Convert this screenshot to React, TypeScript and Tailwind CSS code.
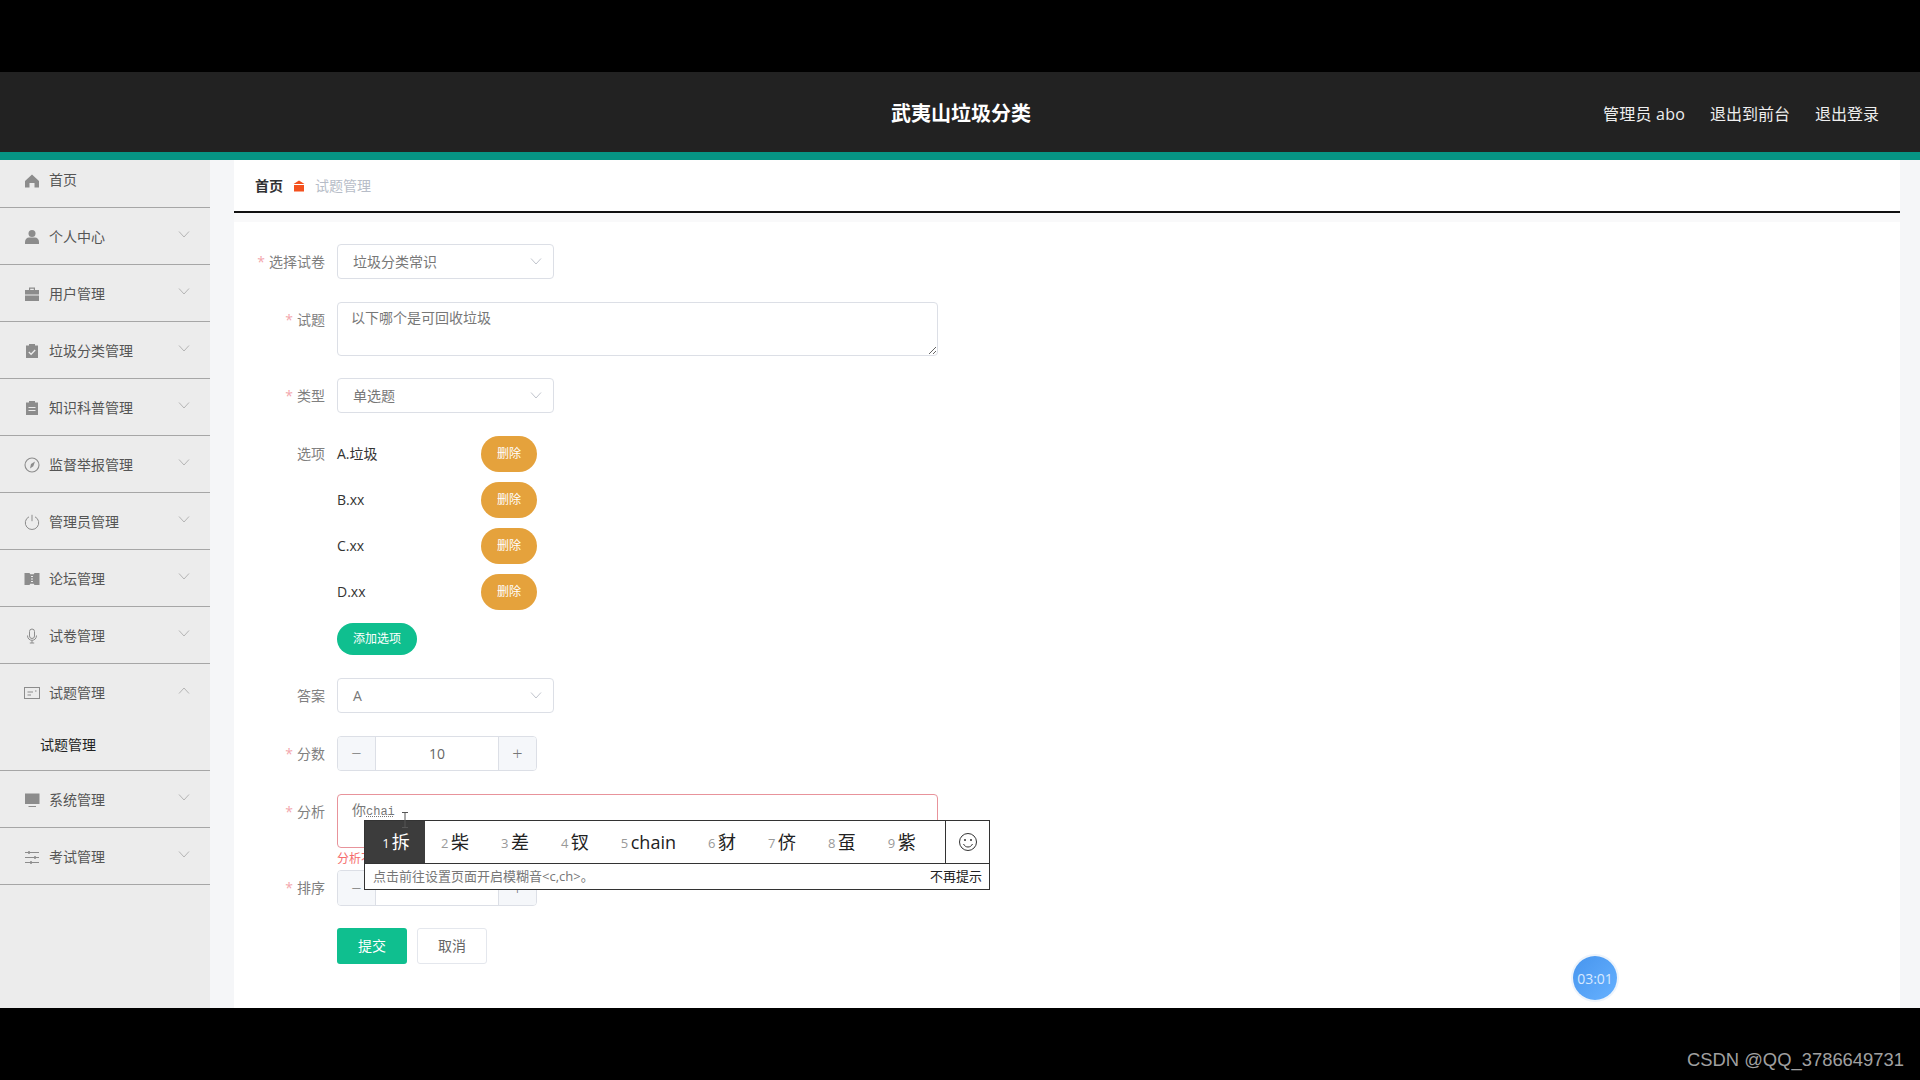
import type { ReactNode } from "react";

const FONT = { fontFamily: '"Open Sans", "Noto Sans CJK SC", sans-serif' };

function Svg({ children }: { children: ReactNode }) {
  return (
    <svg width="16" height="16" viewBox="0 0 16 16" className="shrink-0">
      {children}
    </svg>
  );
}

const GRAY = "#8c8c8c";

const icons: Record<string, ReactNode> = {
  home: <path d="M8 1.500 15 8v6.500h-4.500V10h-5v4.500H1V8Z" fill={GRAY} />,
  user: (
    <g fill={GRAY}>
      <circle cx="8" cy="4.500" r="3.500" />
      <path d="M1 13c0-3 2-4.500 4-4.500h6c2 0 4 1.500 4 4.500v2H1Z" />
    </g>
  ),
  briefcase: (
    <g fill={GRAY}>
      <path d="M5 1.500h6V4H9.800V2.800H6.200V4H5Z" />
      <path d="M1 4h14v4.500H1ZM1 9.500h14V15H1Z" />
    </g>
  ),
  claim: (
    <g>
      <path d="M2 2.500h12V15H2Z" fill={GRAY} />
      <path d="M5 1h6v3H5Z" fill={GRAY} />
      <path d="m4.800 9 2.300 2.300 4.100-4.300" fill="none" stroke="#ececec" strokeWidth="1.300" />
    </g>
  ),
  order: (
    <g>
      <path d="M2 2.500h12V15H2Z" fill={GRAY} />
      <path d="M5 1h6v3H5Z" fill={GRAY} />
      <path d="M4.500 7.500h7M4.500 10.500h7" stroke="#ececec" strokeWidth="1.200" />
    </g>
  ),
  compass: (
    <g>
      <circle cx="8" cy="8" r="7" fill="none" stroke={GRAY} strokeWidth="1.100" />
      <path d="M11 4.500 9.300 9.300 6 11.500l1-4.500Z" fill={GRAY} />
    </g>
  ),
  power: (
    <g fill="none" stroke={GRAY} strokeWidth="1">
      <path d="M5 2.800a6.700 6.700 0 1 0 6 0" />
      <path d="M8 .8v6.400" />
    </g>
  ),
  ticket: (
    <g>
      <path d="M.5 2h5l.8 1.200h3.400l.8-1.200h5v12h-5l-.8-1.200H6.300L5.500 14h-5Z" fill={GRAY} />
      <path d="M7 5.500h2M7 8h2M7 10.500h2" stroke="#ececec" strokeWidth="1" />
    </g>
  ),
  mic: (
    <g fill="none" stroke={GRAY} strokeWidth="1">
      <rect x="5.500" y="1" width="5" height="9.500" rx="2.500" />
      <path d="M3.500 7.500c0 3 2 4.800 4.500 4.800s4.500-1.800 4.500-4.800M8 12.300V15M5.800 15h4.400" />
    </g>
  ),
  note: (
    <g fill="none" stroke={GRAY} strokeWidth="1">
      <rect x=".5" y="2.500" width="15" height="11" />
      <path d="M3.500 7h5.500M3.500 10h3.500M11 6h1.500" />
    </g>
  ),
  monitor: (
    <g fill={GRAY}>
      <path d="M1 1.500h14.500v10.500H1Z" />
      <path d="M4.500 14h7.500v1H4.500Z" />
    </g>
  ),
  sliders: (
    <g fill="none" stroke={GRAY} strokeWidth="1">
      <path d="M1 3.500h14M1 8.500h14M1 13.500h14" />
      <path d="M5 2v3M11 7v3M7 12v3" strokeWidth="1.500" />
    </g>
  ),
};

function Chevron({ up = false, color = "#b4b4b4", size = 12 }: { up?: boolean; color?: string; size?: number }) {
  return (
    <svg width={size} height="7" viewBox="0 0 12 7" className="shrink-0">
      <path d={up ? "M1 6.500 6 1l5 5.500" : "M1 .5 6 6l5-5.500"} fill="none" stroke={color} strokeWidth="1" />
    </svg>
  );
}

function NavItem({ icon, label, up }: { icon: string; label: string; up?: boolean }) {
  return (
    <div className={`flex items-center pl-[24px] pr-[20px] pt-[1px] ${up ? "h-[56px]" : "h-[57px] border-b border-[#a6a6a6]"}`}>
      <Svg>{icons[icon]}</Svg>
      <span className="ml-[9px] flex-1 text-[14px] text-[#555]">{label}</span>
      <div className="mb-[5px]">
        <Chevron up={up} />
      </div>
    </div>
  );
}

function Sidebar() {
  return (
    <aside className="w-[210px] shrink-0 bg-[#ececec]">
      <div className="flex h-[48px] items-center border-b border-[#a6a6a6] pb-[5px] pl-[24px]">
        <Svg>{icons.home}</Svg>
        <span className="mb-[3px] ml-[9px] text-[14px] text-[#555]">首页</span>
      </div>
      <NavItem icon="user" label="个人中心" />
      <NavItem icon="briefcase" label="用户管理" />
      <NavItem icon="claim" label="垃圾分类管理" />
      <NavItem icon="order" label="知识科普管理" />
      <NavItem icon="compass" label="监督举报管理" />
      <NavItem icon="power" label="管理员管理" />
      <NavItem icon="ticket" label="论坛管理" />
      <NavItem icon="mic" label="试卷管理" />
      <NavItem icon="note" label="试题管理" up />
      <div className="flex h-[51px] items-center border-b border-[#a6a6a6] pb-[2px] pl-[40px] text-[14px] text-[#222]">试题管理</div>
      <NavItem icon="monitor" label="系统管理" />
      <NavItem icon="sliders" label="考试管理" />
    </aside>
  );
}

function Row({ label, required, className, children }: { label?: string; required?: boolean; className: string; children: ReactNode }) {
  return (
    <div className={`flex ${className}`}>
      <label className="mr-[12px] w-[91px] shrink-0 text-right text-[14px] leading-[35px] text-[#808080]">
        {required && <span className="mr-[4px] text-[#f3a6ad]">*</span>}
        {label}
      </label>
      {children}
    </div>
  );
}

function FakeSelect({ value }: { value: string }) {
  return (
    <div className="flex h-[35px] w-[217px] items-center justify-between rounded-[4px] border border-[#dcdfe6] bg-white pl-[15px] pr-[11px] text-[14px] text-[#777]">
      <span>{value}</span>
      <Chevron color="#c0c4cc" />
    </div>
  );
}

function NumberBox({ value, h }: { value?: string; h: string }) {
  return (
    <div className={`flex w-[200px] overflow-hidden rounded-[4px] border border-[#dcdfe6] text-[#777] ${h}`}>
      <div className="flex w-[38px] items-center justify-center border-r border-[#dcdfe6] bg-[#f5f7fa] text-[18px] font-light">−</div>
      <div className="flex flex-1 items-center justify-center text-[14px] text-[#666]">{value}</div>
      <div className="flex w-[38px] items-center justify-center border-l border-[#dcdfe6] bg-[#f5f7fa] text-[18px] font-light">+</div>
    </div>
  );
}

function OptionRow({ text, className }: { text: string; className: string }) {
  return (
    <div className={`flex items-center ${className}`}>
      <span className="mb-[1px] w-[144px] text-[14px] text-[#333]">{text}</span>
      <button className="h-[36px] w-[56px] rounded-[18px] bg-[#e5a23c] text-[12px] text-white">删除</button>
    </div>
  );
}

const candidates = [
  ["2", "柴"],
  ["3", "差"],
  ["4", "钗"],
  ["5", "chain"],
  ["6", "豺"],
  ["7", "侪"],
  ["8", "虿"],
  ["9", "紫"],
];

function ImePopup() {
  return (
    <div className="absolute left-[130px] top-[598px] w-[626px] border border-[#333] bg-white">
      <div className="flex h-[42px] items-center pt-[1px]">
        <div className="-mt-[1px] flex h-[42px] w-[60px] items-center justify-center bg-[#3c3c3c] pl-[2px] text-white">
          <span className="mr-[2px] mt-[3px] text-[13px]">1</span>
          <span className="text-[18px]">拆</span>
        </div>
        {candidates.map(([n, c]) => (
          <div key={n} className="flex items-center px-[16px] text-[18px] text-[#222]">
            <span className="mr-[2.5px] mt-[3px] text-[13px] text-[#999]">{n}</span>
            <span>{c}</span>
          </div>
        ))}
        <div className="-mt-[1px] ml-auto flex h-[42px] w-[44px] items-center justify-center border-l border-[#333]">
          <svg width="20" height="20" viewBox="0 0 20 20">
            <circle cx="10" cy="10" r="8.500" fill="none" stroke="#333" strokeWidth="1" />
            <circle cx="7" cy="8" r="1" fill="#333" />
            <circle cx="13" cy="8" r="1" fill="#333" />
            <path d="M5.500 12c1 2 2.500 3 4.500 3s3.500-1 4.500-3" fill="none" stroke="#333" strokeWidth="1" />
          </svg>
        </div>
      </div>
      <div className="flex h-[26px] items-center justify-between border-t border-[#333] pl-[8px] pr-[7px] text-[13px]">
        <span className="text-[#777]">点击前往设置页面开启模糊音&lt;c,ch&gt;。</span>
        <span className="text-[#222]">不再提示</span>
      </div>
    </div>
  );
}

function QuestionForm() {
  return (
    <div className="relative mt-[9px] flex-1 bg-white pt-[22px]">
      <Row label="选择试卷" required className="">
        <FakeSelect value="垃圾分类常识" />
      </Row>
      <Row label="试题" required className="mt-[23px]">
        <textarea
          className="h-[54px] w-[601px] rounded-[4px] border border-[#dcdfe6] px-[13px] py-[4px] text-[14px] text-[#777] outline-none"
          defaultValue="以下哪个是可回收垃圾"
        />
      </Row>
      <Row label="类型" required className="mt-[22px]">
        <FakeSelect value="单选题" />
      </Row>
      <Row label="选项" className="mt-[23px]">
        <OptionRow text="A.垃圾" className="" />
      </Row>
      <div className="ml-[103px]">
        <OptionRow text="B.xx" className="mt-[10px]" />
        <OptionRow text="C.xx" className="mt-[10px]" />
        <OptionRow text="D.xx" className="mt-[10px]" />
        <button className="mt-[13px] block h-[32px] w-[80px] rounded-[16px] bg-[#0fbf8f] text-[12px] text-white">添加选项</button>
      </div>
      <Row label="答案" className="mt-[23px]">
        <FakeSelect value="A" />
      </Row>
      <Row label="分数" required className="mt-[23px]">
        <NumberBox value="10" h="h-[35px]" />
      </Row>
      <Row label="分析" required className="mt-[23px]">
        <div className="relative h-[54px] w-[601px] rounded-[4px] border border-[#e8939b] px-[14px] py-[4px] text-[14px] text-[#777]">
          你<span className="font-['Liberation_Mono'] text-[12px] underline decoration-dotted">chai</span>
          <span className="absolute left-[-1px] top-[55px] text-[12px] text-[#f56c6c]">分析不能为空</span>
        </div>
      </Row>
      <Row label="排序" required className="mt-[22px]">
        <NumberBox h="h-[36px]" />
      </Row>
      <div className="ml-[103px] mt-[22px] flex gap-[10px]">
        <button className="h-[36px] w-[70px] rounded-[3px] bg-[#0fbf8f] pb-[2px] text-[14px] text-white">提交</button>
        <button className="h-[36px] w-[70px] rounded-[3px] border border-[#e4e7ed] bg-white pb-[2px] text-[14px] text-[#666]">取消</button>
      </div>

      <ImePopup />
      {/* text cursor sitting on the IME edge */}
      <svg width="10" height="16" viewBox="0 0 10 16" className="absolute left-[166px] top-[590px]">
        <path d="M2 .5h6M5 .5v15M2 15.500h6" fill="none" stroke="#555" strokeWidth="1" />
      </svg>
      {/* floating timer */}
      <div className="absolute bottom-[8px] right-[283px] flex h-[44px] w-[44px] items-center justify-center rounded-full bg-gradient-to-br from-[#4795ee] to-[#66b1ff] text-[14px] text-[#d8e9ff] shadow-[0_0_0_2px_#eef4fb]">
        03:01
      </div>
    </div>
  );
}

export default function App() {
  return (
    <div className="flex h-[1080px] flex-col overflow-hidden bg-black" style={FONT}>
      <div className="h-[72px] shrink-0" />
      <header className="grid h-[80px] shrink-0 grid-cols-[1fr_auto_1fr] items-center bg-[#222222] pt-[3px] text-white">
        <div />
        <div className="pl-[2px] text-[20px] font-bold">武夷山垃圾分类</div>
        <div className="flex justify-end gap-[25px] pr-[41px] text-[16px] text-[#eee]">
          <span className="tracking-[0.2px]">管理员 abo</span>
          <span>退出到前台</span>
          <span>退出登录</span>
        </div>
      </header>
      <div className="h-[8px] shrink-0 bg-[#069484]" />
      <div className="flex h-[848px] shrink-0 bg-[#f5f6f8]">
        <Sidebar />
        <main className="ml-[24px] mr-[20px] flex flex-1 flex-col bg-[#f9f9fa]">
          <div className="flex h-[53px] shrink-0 items-center border-b-2 border-[#111] bg-white pl-[21px] text-[14px]">
            <span className="font-bold text-[#303133]">首页</span>
            <svg width="12" height="12" viewBox="0 0 12 12" className="ml-[10px] mr-[10px]">
              <path d="M6 .5 11.500 4H.5Z M1 5h10v6.500H1Z" fill="#f4511e" />
            </svg>
            <span className="text-[#b7bdc8]">试题管理</span>
          </div>
          <QuestionForm />
        </main>
      </div>
      <footer className="flex flex-1 items-center justify-end pr-[16px] pt-[31px] font-['Liberation_Sans'] text-[18.4px] text-[#a0a0a0]">
        CSDN @QQ_3786649731
      </footer>
    </div>
  );
}
